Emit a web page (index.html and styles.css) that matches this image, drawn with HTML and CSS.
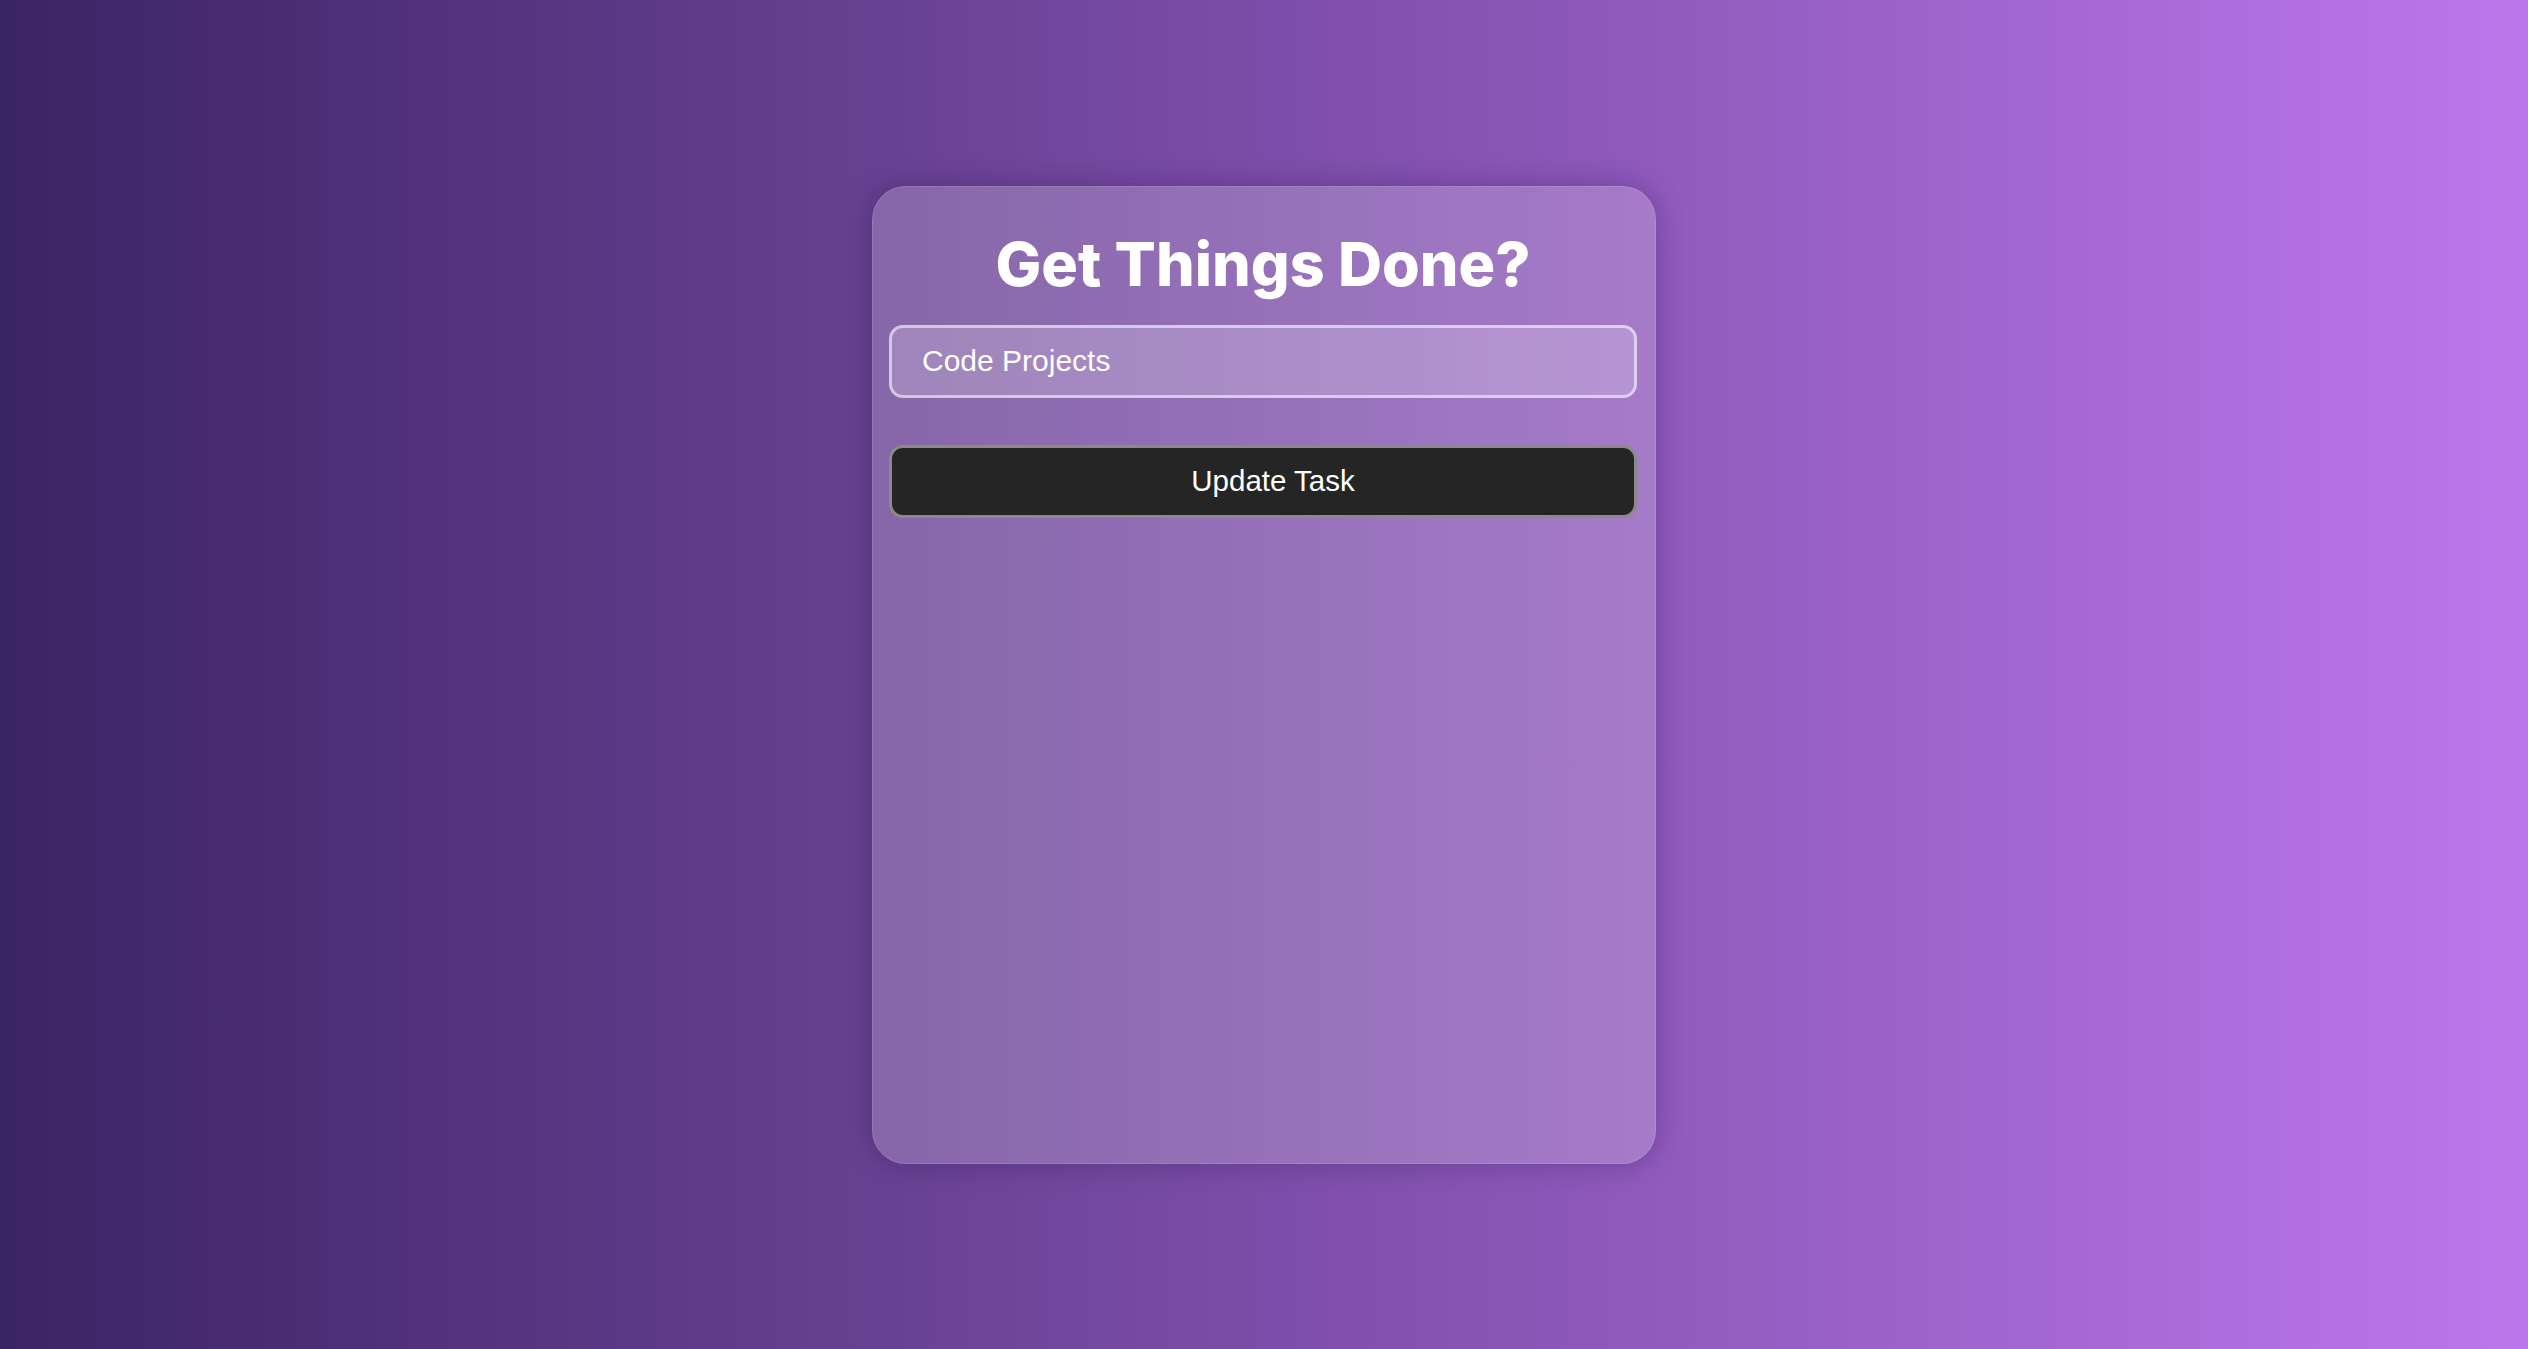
FILE: index.html
```html
<!DOCTYPE html>
<html lang="en">
<head>
<meta charset="utf-8">
<title>Get Things Done?</title>
<link rel="stylesheet" href="styles.css">
</head>
<body>
  <main class="card">
    <h1 class="title">Get Things Done?</h1>
    <form class="task-form">
      <input class="task-input" type="text" value="Code Projects">
      <button class="task-button" type="button">Update Task</button>
    </form>
  </main>
</body>
</html>
```

FILE: styles.css
```css
* {
  box-sizing: border-box;
}

html,
body {
  margin: 0;
  height: 100%;
}

body {
  display: flex;
  align-items: center;
  justify-content: center;
  background: linear-gradient(90deg, #3b2464 0%, #bd77ec 100%);
  font-family: "Liberation Sans", Arial, sans-serif;
}

.card {
  width: 784px;
  height: 978px;
  padding: 41px 18px 0 16px;
  border: 1px solid rgba(255, 255, 255, 0.12);
  border-radius: 34px;
  background: rgba(255, 255, 255, 0.2);
  box-shadow: 0 0 28px rgba(30, 10, 60, 0.3);
  display: flex;
  flex-direction: column;
  align-items: stretch;
}

.title {
  margin: 0;
  font-family: Inter, "Noto Sans", sans-serif;
  font-weight: 800;
  font-size: 61px;
  line-height: 72px;
  letter-spacing: 0;
  color: #ffffff;
  text-align: center;
}

.task-form {
  margin-top: 25px;
  display: flex;
  flex-direction: column;
  gap: 47px;
}

.task-input {
  height: 73px;
  padding: 0 30px;
  border: 3px solid rgba(255, 255, 255, 0.55);
  border-radius: 14px;
  background: rgba(255, 255, 255, 0.2);
  color: #ffffff;
  font-family: "Liberation Sans", Arial, sans-serif;
  font-size: 30px;
  outline: none;
}

.task-button {
  height: 73px;
  padding: 0 0 0 20px;
  border: 3px solid #8a8a8a;
  border-radius: 14px;
  background: #252525;
  color: #ffffff;
  font-family: "Liberation Sans", Arial, sans-serif;
  font-size: 29.5px;
  cursor: pointer;
}
```
